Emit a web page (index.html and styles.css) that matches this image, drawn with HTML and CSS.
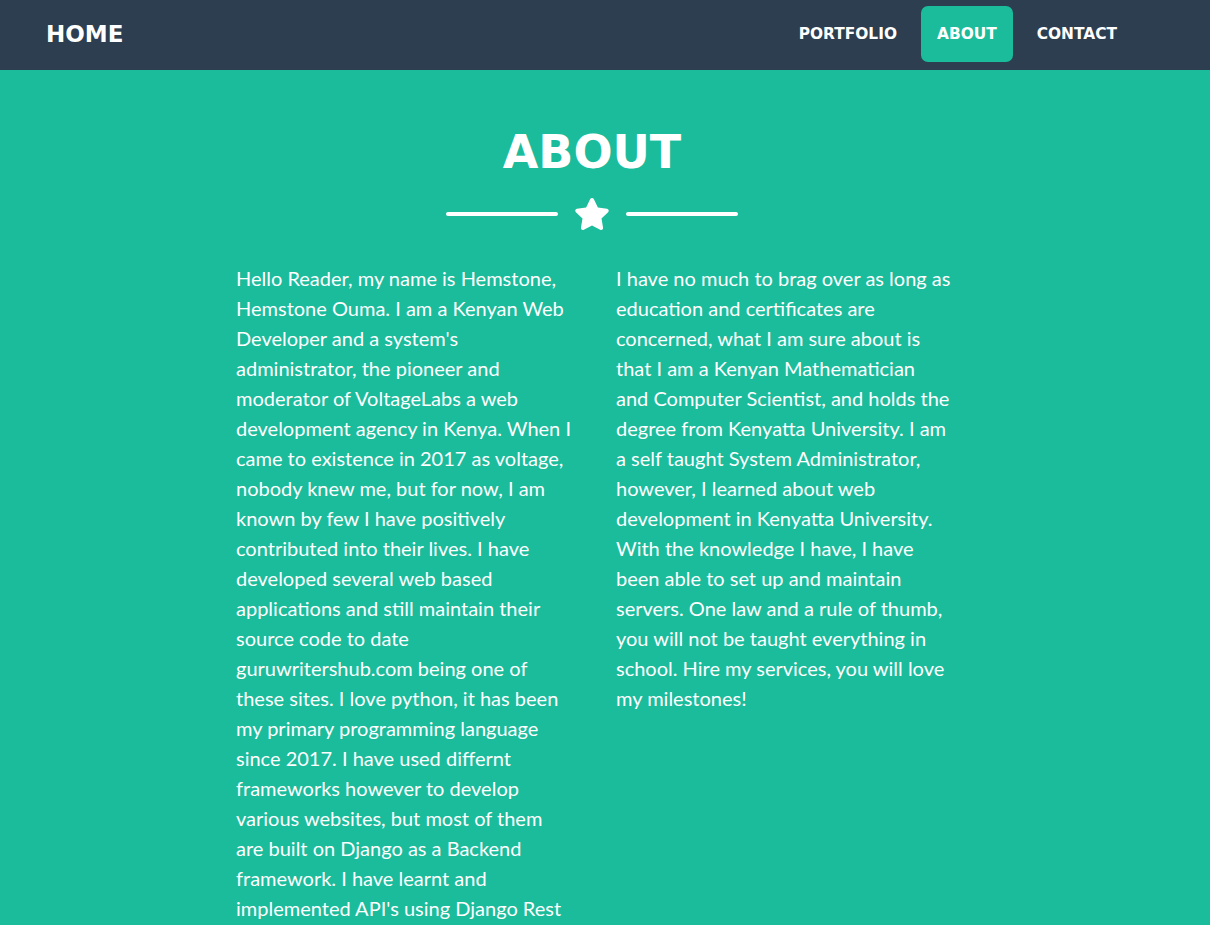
FILE: index.html
```html
<!DOCTYPE html>
<html lang="en">
<head>
<meta charset="utf-8">
<title>About</title>
<link rel="stylesheet" href="styles.css">
</head>
<body>
<nav class="navbar">
  <a class="brand" href="#">HOME</a>
  <ul class="nav-links">
    <li><a class="nav-link" href="#">PORTFOLIO</a></li>
    <li><a class="nav-link active" href="#">ABOUT</a></li>
    <li><a class="nav-link" href="#">CONTACT</a></li>
  </ul>
</nav>
<section class="about">
  <h2 class="section-heading">ABOUT</h2>
  <div class="divider">
    <span class="divider-line"></span>
    <svg class="divider-icon" viewBox="0 0 576 512" width="36" height="32" aria-hidden="true"><path fill="#fff" d="M259.3 17.8L194 150.2 47.9 171.5c-26.2 3.8-36.7 36.1-17.7 54.6l105.7 103-25 145.5c-4.5 26.3 23.2 46 46.4 33.7L288 439.6l130.7 68.7c23.2 12.2 50.9-7.4 46.4-33.7l-25-145.5 105.7-103c19-18.5 8.5-50.8-17.7-54.6L382 150.2 316.7 17.8c-11.7-23.6-45.6-23.9-57.4 0z"/></svg>
    <span class="divider-line"></span>
  </div>
  <div class="columns">
    <p class="lead">Hello Reader, my name is Hemstone, Hemstone Ouma. I am a Kenyan Web Developer and a system's administrator, the pioneer and moderator of VoltageLabs a web development agency in Kenya. When I came to existence in 2017 as voltage, nobody knew me, but for now, I am known by few I have positively contributed into their lives. I have developed several web based applications and still maintain their source code to date guruwritershub.com being one of these sites. I love python, it has been my primary programming language since 2017. I have used differnt frameworks however to develop various websites, but most of them are built on Django as a Backend framework. I have learnt and implemented API's using Django Rest Framework and I am always open to learning new technologies.</p>
    <p class="lead">I have no much to brag over as long as education and certificates are concerned, what I am sure about is that I am a Kenyan Mathematician and Computer Scientist, and holds the degree from Kenyatta University. I am a self taught System Administrator, however, I learned about web development in Kenyatta University. With the knowledge I have, I have been able to set up and maintain servers. One law and a rule of thumb, you will not be taught everything in school. Hire my services, you will love my milestones!</p>
  </div>
</section>
</body>
</html>
```

FILE: styles.css
```css
* {
  box-sizing: border-box;
}

html, body {
  margin: 0;
  padding: 0;
}

body {
  background: #1abc9c;
  color: #fff;
  font-family: "Lato", "Noto Sans", sans-serif;
}

.navbar {
  height: 70px;
  background: #2c3e50;
  display: flex;
  align-items: center;
  justify-content: space-between;
  padding: 0 73px 2px 46px;
}

.brand {
  font-family: "DejaVu Sans", sans-serif;
  font-weight: 700;
  font-size: 23px;
  color: #fff;
  text-decoration: none;
  line-height: 1;
}

.nav-links {
  list-style: none;
  margin: 0;
  padding: 0;
  display: flex;
  align-items: center;
}

.nav-links li {
  margin: 0 4px;
}

.nav-link {
  display: flex;
  align-items: center;
  height: 56px;
  padding: 0 16px;
  border-radius: 7px;
  font-family: "DejaVu Sans", sans-serif;
  font-weight: 700;
  font-size: 15.4px;
  color: #fff;
  text-decoration: none;
}

.nav-link.active {
  background: #1abc9c;
}

.about {
  padding: 59px 26px 40px 0;
}

.section-heading {
  margin: 0;
  text-align: center;
  font-family: "DejaVu Sans", sans-serif;
  font-weight: 700;
  font-size: 46px;
  line-height: 46px;
}

.divider {
  margin-top: 21px;
  height: 36px;
  display: flex;
  align-items: center;
  justify-content: center;
}

.divider-line {
  width: 112px;
  height: 4px;
  border-radius: 16px;
  background: #fff;
}

.divider-icon {
  margin: 0 16px;
  display: block;
}

.columns {
  margin-top: 31px;
  padding-left: 3px;
  display: flex;
  justify-content: center;
  gap: 45px;
}

.lead {
  width: 335px;
  margin: 0;
  font-size: 20px;
  line-height: 30px;
  font-weight: 400;
}
```
